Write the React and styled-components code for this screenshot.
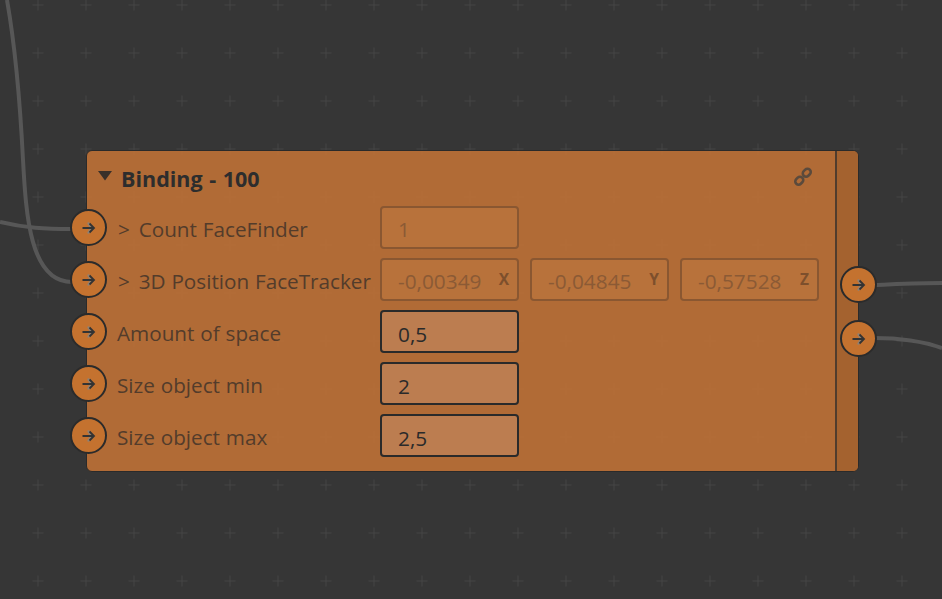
import styled, { createGlobalStyle } from "styled-components";

const GlobalStyle = createGlobalStyle`
  html, body {
    margin: 0;
    padding: 0;
    background: #363636;
  }
`;

const Canvas = styled.div`
  position: relative;
  width: 942px;
  height: 599px;
  overflow: hidden;
  background: #363636;
  font-family: "Open Sans", "Noto Sans", sans-serif;
`;

const Backdrop = styled.svg`
  position: absolute;
  left: 0;
  top: 0;
`;

const Node = styled.div`
  position: absolute;
  left: 86px;
  top: 150px;
  width: 773px;
  height: 322px;
  box-sizing: border-box;
  display: flex;
  border: 1px solid #2a2a2a;
  border-radius: 6px;
  background: rgba(182, 109, 55, 0.97);
`;

const Body = styled.div`
  flex: 1;
  display: flex;
  flex-direction: column;
  position: relative;
`;

const Header = styled.div`
  height: 55px;
  display: flex;
  align-items: center;
  padding: 0 0 0 10px;
  box-sizing: border-box;
`;

const Caret = styled.svg`
  margin-top: -5px;
`;

const Title = styled.span`
  margin-left: 8px;
  font-size: 21.5px;
  font-weight: 700;
  word-spacing: 1px;
  color: #2d2d2d;
`;

const LinkIcon = styled.svg`
  position: absolute;
  right: 22px;
  top: 16px;
`;

const Rows = styled.div`
  display: flex;
  flex-direction: column;
  gap: 9px;
`;

const Row = styled.div`
  position: relative;
  height: 43px;
  display: flex;
  align-items: center;
`;

const Label = styled.span`
  width: 293px;
  flex: none;
  box-sizing: border-box;
  padding: 3px 0 0 ${(p) => (p.$linked ? 31 : 30)}px;
  font-size: 20.7px;
  word-spacing: 0.5px;
  color: #533c2b;
  white-space: nowrap;
`;

const Marker = styled.span`
  margin-right: 3px;
`;

const Fields = styled.div`
  display: flex;
  gap: 11px;
`;

const Field = styled.div`
  width: 139px;
  height: 43px;
  box-sizing: border-box;
  display: flex;
  align-items: center;
  justify-content: space-between;
  padding: ${(p) => (p.$disabled ? "2px" : "4px")} 8px 0 16px;
  border: 2px solid ${(p) => (p.$disabled ? "#8a5731" : "#2a2a2a")};
  border-radius: 4px;
  background: ${(p) => (p.$disabled ? "#b8723b" : "#bc7d50")};
  color: ${(p) => (p.$disabled ? "#8b5a35" : "#2a2a2a")};
  font-size: 20.8px;
`;

const Axis = styled.span`
  margin-top: -3px;
  font-size: 15.5px;
  font-weight: 700;
  color: #7d4f2c;
`;

const Side = styled.div`
  position: relative;
  flex: none;
  width: 21px;
  border-left: 2px solid #503c2d;
  border-radius: 0 5px 5px 0;
  background: #a4622f;
`;

const PortShell = styled.div`
  position: absolute;
  left: ${(p) => p.$left}px;
  top: ${(p) => p.$top}px;
  width: 37px;
  height: 37px;
  box-sizing: border-box;
  display: flex;
  align-items: center;
  justify-content: center;
  border: 2px solid #2b2b2b;
  border-radius: 50%;
  background: #c4722f;
`;

function Port({ left, top }) {
  return (
    <PortShell $left={left} $top={top}>
      <svg width="16" height="16" viewBox="0 0 16 16" fill="none">
        <path d="M7 2.5 L10 8 L7 13.5" stroke="#8f8073" strokeWidth="2.2" />
        <path d="M1.5 8 H13 M8.5 3.5 L13 8 L8.5 12.5" stroke="#333" strokeWidth="1.8" />
      </svg>
    </PortShell>
  );
}

const rows = [
  { label: "Count FaceFinder", linked: true, fields: [{ value: "1", disabled: true }] },
  {
    label: "3D Position FaceTracker",
    linked: true,
    fields: [
      { value: "-0,00349", axis: "X", disabled: true },
      { value: "-0,04845", axis: "Y", disabled: true },
      { value: "-0,57528", axis: "Z", disabled: true },
    ],
  },
  { label: "Amount of space", fields: [{ value: "0,5" }] },
  { label: "Size object min", fields: [{ value: "2" }] },
  { label: "Size object max", fields: [{ value: "2,5" }] },
];

export default function App() {
  return (
    <Canvas>
      <GlobalStyle />
      <Backdrop width="942" height="599">
        <defs>
          <pattern id="grid" x="14" y="-19" width="48" height="48" patternUnits="userSpaceOnUse">
            <path d="M18.5 24 H29.5 M24 18.5 V29.5" stroke="#444444" strokeWidth="1" />
          </pattern>
        </defs>
        <rect width="942" height="599" fill="url(#grid)" />
        <g fill="none" stroke="#575757" strokeWidth="4">
          <path d="M7 0 C14 40 20 100 23 160 C26 215 30 282 72 282" />
          <path d="M0 222 C25 228 45 229 72 229" />
          <path d="M874 285 C900 284 920 283 942 283" />
          <path d="M874 338 C900 338 922 341 942 348" />
        </g>
      </Backdrop>
      <Node>
        <Body>
          <Header>
            <Caret width="16" height="12" viewBox="0 0 16 12">
              <path d="M1 1 H15 L8 10.5 Z" fill="#3a3029" />
            </Caret>
            <Title>Binding - 100</Title>
          </Header>
          <LinkIcon width="20" height="20" viewBox="0 0 20 20" fill="none" stroke="#5b4a3c" strokeWidth="2.6">
            <rect x="9.5" y="2.5" width="8.5" height="6.5" rx="3.2" transform="rotate(-45 13.7 5.7)" />
            <rect x="2" y="10.5" width="8.5" height="6.5" rx="3.2" transform="rotate(-45 6.2 13.7)" />
          </LinkIcon>
          <Rows>
            {rows.map((row) => (
              <Row key={row.label}>
                <Label $linked={row.linked}>
                  {row.linked && <Marker>&gt; </Marker>}
                  {row.label}
                </Label>
                <Fields>
                  {row.fields.map((field) => (
                    <Field key={field.value} $disabled={field.disabled}>
                      <span>{field.value}</span>
                      {field.axis && <Axis>{field.axis}</Axis>}
                    </Field>
                  ))}
                </Fields>
                <Port left={-17} top={3} />
              </Row>
            ))}
          </Rows>
        </Body>
        <Side>
          <Port left={3} top={115} />
          <Port left={3} top={169} />
        </Side>
      </Node>
    </Canvas>
  );
}
